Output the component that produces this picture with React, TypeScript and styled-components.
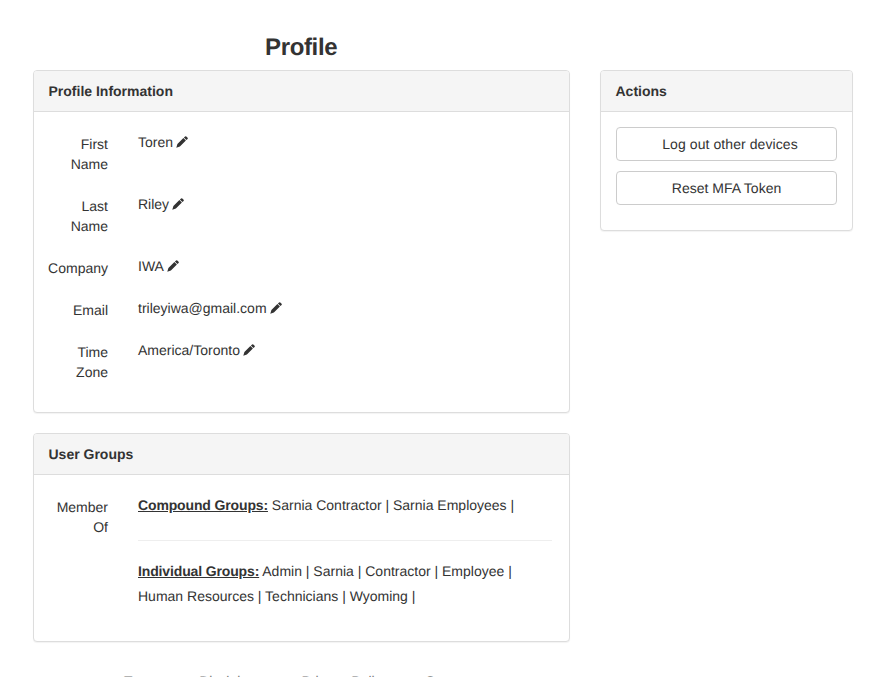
import styled, { createGlobalStyle } from "styled-components";

const GlobalStyle = createGlobalStyle`
  html, body {
    margin: 0;
    padding: 0;
    height: 677px;
    overflow: hidden;
    background: #fff;
  }
  body {
    font-family: "Liberation Sans", Arial, sans-serif;
    font-size: 14px;
    line-height: 20px;
    color: #333;
    text-rendering: geometricPrecision;
  }
`;

const Page = styled.div`
  display: grid;
  grid-template-columns: 537px 253px;
  column-gap: 30px;
  padding: 32px 26px 0 33px;
`;

const Title = styled.h1`
  grid-column: 1 / -1;
  margin: 0 0 6px;
  padding-left: 232px;
  font-size: 24px;
  line-height: 32px;
  font-weight: 700;
  letter-spacing: -0.35px;
  color: #333;
`;

const Column = styled.div`
  display: flex;
  flex-direction: column;
  gap: 20px;
`;

const Panel = styled.section`
  background: #fff;
  border: 1px solid #ddd;
  border-radius: 4px;
  box-shadow: 0 1px 1px rgba(0, 0, 0, 0.05);
`;

const PanelHeading = styled.h3`
  margin: 0;
  padding: 10px 14.5px;
  height: 41px;
  box-sizing: border-box;
  background: #f5f5f5;
  border-bottom: 1px solid #ddd;
  border-radius: 3px 3px 0 0;
  font-size: 14px;
  line-height: 20px;
  font-weight: 700;
`;

const InfoBody = styled.div`
  padding: 22px 17px 30px 0;
  display: flex;
  flex-direction: column;
  gap: 22px;
`;

const Row = styled.div`
  display: grid;
  grid-template-columns: 74px 1fr;
  column-gap: 30px;
`;

const FieldLabel = styled.div`
  text-align: right;
  line-height: 20px;
`;

const FieldValue = styled.div`
  margin-top: -2px;
  display: flex;
  align-items: flex-start;
  gap: 3px;
`;

const Pencil = styled.svg`
  width: 12px;
  height: 12px;
  margin-top: 4px;
  fill: #333;
`;

const GroupsBody = styled.div`
  padding: 18px 17px 32px 0;
  display: grid;
  grid-template-columns: 74px 1fr;
  column-gap: 30px;
`;

const GroupLabel = styled.div`
  text-align: right;
  padding-top: 4px;
`;

const GroupLine = styled.p`
  margin: 0;
  line-height: 25px;
`;

const Divider = styled.hr`
  margin: 22px 0 18px;
  border: 0;
  border-top: 1px solid #eee;
`;

const GroupKind = styled.strong`
  text-decoration: underline;
  letter-spacing: -0.14px;
`;

const ActionsBody = styled.div`
  padding: 15px 15px 25px;
  display: flex;
  flex-direction: column;
  gap: 10px;
`;

const ActionButton = styled.button<{ $inset?: number; $tracking?: number }>`
  height: 34px;
  background: #fff;
  border: 1px solid #ccc;
  border-radius: 4px;
  color: #333;
  font-family: inherit;
  font-size: 14px;
  line-height: 20px;
  letter-spacing: ${(props) => props.$tracking ?? 0}px;
  padding: 0 12px 0 ${(props) => 12 + (props.$inset ?? 0)}px;
  text-rendering: geometricPrecision;
  cursor: pointer;
`;

const Footer = styled.div`
  display: flex;
  gap: 37px;
  padding-left: 91px;
  margin-top: 9px;
  color: #777;
`;

const fields: { label: React.ReactNode; value: string }[] = [
  { label: <>First<br />Name</>, value: "Toren" },
  { label: <>Last<br />Name</>, value: "Riley" },
  { label: "Company", value: "IWA" },
  { label: "Email", value: "trileyiwa@gmail.com" },
  { label: <>Time<br />Zone</>, value: "America/Toronto" },
];

function PencilIcon() {
  return (
    <Pencil viewBox="0 0 12 12" aria-hidden="true">
      <path d="M9.1 0.4a0.9 0.9 0 0 1 1.2 0l1.3 1.3a0.9 0.9 0 0 1 0 1.2L10.4 4.1 7.9 1.6zM7.4 2.1l2.5 2.5L3.9 10.6 0.3 11.7l1.1-3.6z" />
    </Pencil>
  );
}

export default function App() {
  return (
    <>
      <GlobalStyle />
      <Page>
        <Title>Profile</Title>
        <Column>
          <Panel>
            <PanelHeading>Profile Information</PanelHeading>
            <InfoBody>
              {fields.map((field) => (
                <Row key={field.value}>
                  <FieldLabel>{field.label}</FieldLabel>
                  <FieldValue>
                    {field.value}
                    <PencilIcon />
                  </FieldValue>
                </Row>
              ))}
            </InfoBody>
          </Panel>
          <Panel>
            <PanelHeading>User Groups</PanelHeading>
            <GroupsBody>
              <GroupLabel>Member<br />Of</GroupLabel>
              <div>
                <GroupLine>
                  <GroupKind>Compound Groups:</GroupKind> Sarnia Contractor | Sarnia Employees |
                </GroupLine>
                <Divider />
                <GroupLine>
                  <GroupKind>Individual Groups:</GroupKind> Admin | Sarnia | Contractor | Employee |<br />
                  Human Resources | Technicians | Wyoming |
                </GroupLine>
              </div>
            </GroupsBody>
          </Panel>
          <Footer>
            <span>Terms</span>
            <span>Disclaimer</span>
            <span>Privacy Policy</span>
            <span>Support</span>
          </Footer>
        </Column>
        <Column>
          <Panel>
            <PanelHeading>Actions</PanelHeading>
            <ActionsBody>
              <ActionButton $inset={7} $tracking={0.08}>Log out other devices</ActionButton>
              <ActionButton>Reset MFA Token</ActionButton>
            </ActionsBody>
          </Panel>
        </Column>
      </Page>
    </>
  );
}
